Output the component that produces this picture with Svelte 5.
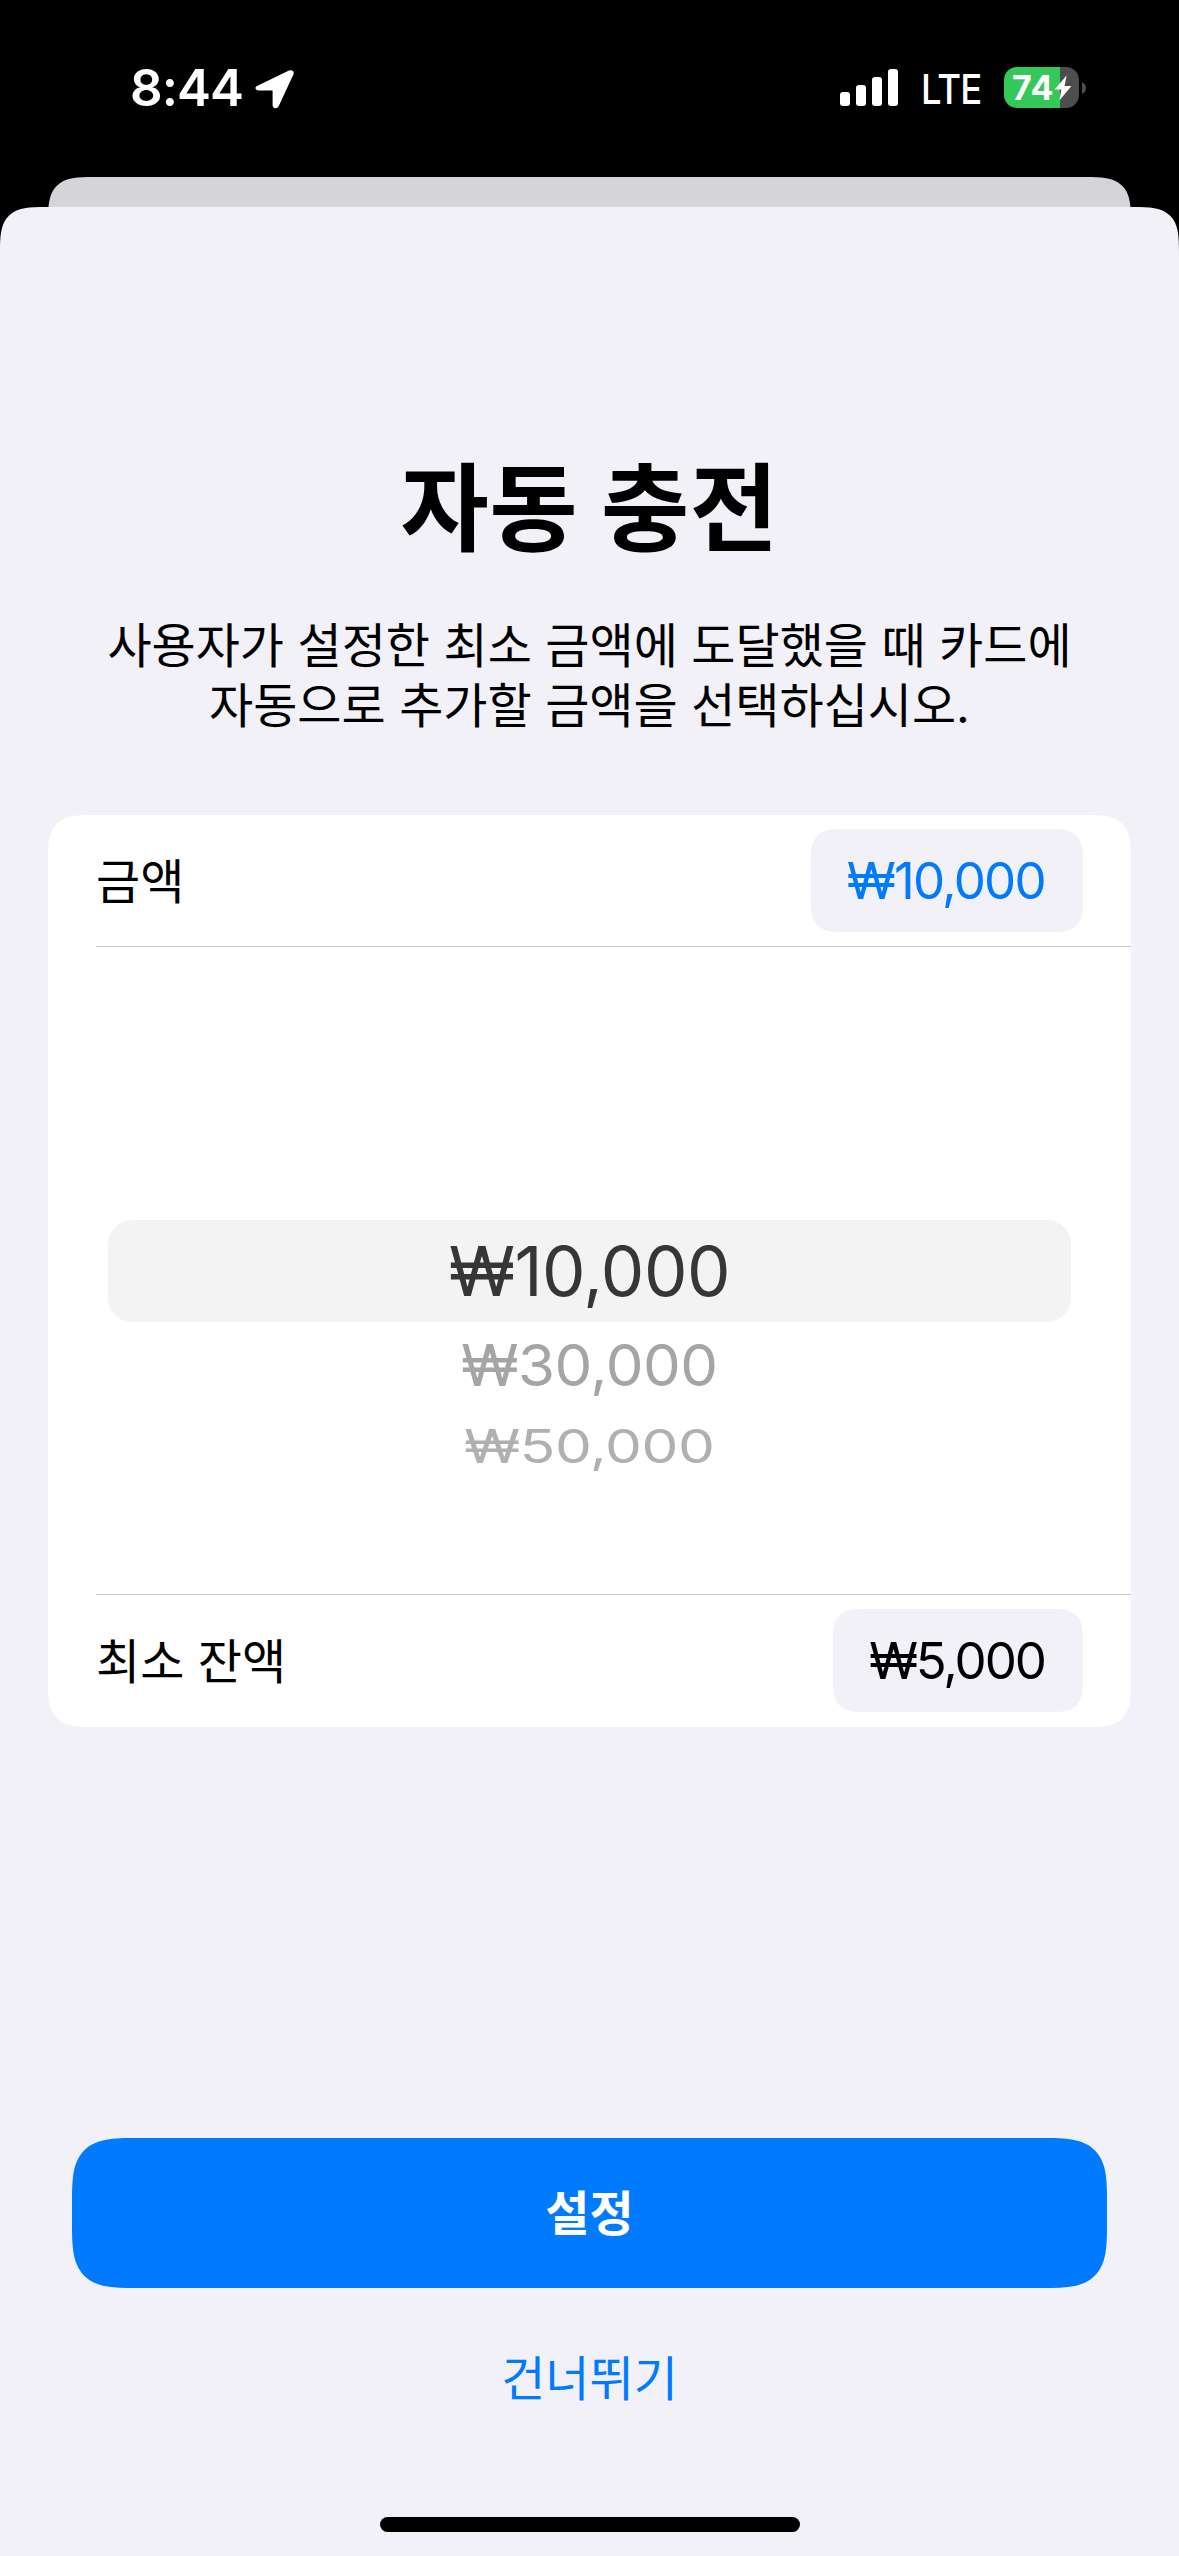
<script>
  const bars = [14, 21, 29, 37];
  const options = [
    { text: '₩10,000', kind: 'selected' },
    { text: '₩30,000', kind: 'second' },
    { text: '₩50,000', kind: 'third' },
  ];
</script>

<div class="screen">
  <header class="status">
    <div class="clock">
      <span class="time">8:44</span>
      <svg class="arrow" width="40" height="40" viewBox="0 0 40 40"><path d="M3 16.5 L34 1.6 Q39.5 -0.2 38.6 5 L23.8 37 Q21.8 40.5 18.8 38.8 Q17.6 37.8 17.6 36 V21.6 H4 Q0.6 21.4 0.4 18.8 Q0.6 17.4 3 16.5Z" fill="#fff" /></svg>
    </div>
    <div class="indicators">
      <div class="signal">
        {#each bars as h}<i style="height:{h}px"></i>{/each}
      </div>
      <span class="lte">LTE</span>
      <div class="battery">
        <div class="cell">
          <span class="pct">74</span>
          <svg width="18" height="26" viewBox="0 0 18 26"><path d="M12.6 0.6 L0.6 14.6 H7.4 L5.4 25.4 L17.4 10.9 H10.6Z" fill="#fff" /></svg>
        </div>
        <svg width="4" height="12" viewBox="0 0 4 12"><path d="M0 0 Q4 2 4 6 Q4 10 0 12Z" fill="#4d4d4f" /></svg>
      </div>
    </div>
  </header>
  <div class="behind"></div>
  <main class="sheet">
    <h1>자동 충전</h1>
    <p class="desc">사용자가 설정한 최소 금액에 도달했을 때 카드에<br />자동으로 추가할 금액을 선택하십시오.</p>
    <section class="card">
      <div class="row">
        <span class="label">금액</span>
        <button class="pill active">₩10,000</button>
      </div>
      <div class="picker">
        {#each options as o}
          <div class="option {o.kind}">{o.text}</div>
        {/each}
      </div>
      <div class="row last">
        <span class="label">최소 잔액</span>
        <button class="pill small">₩5,000</button>
      </div>
    </section>
    <footer>
      <button class="primary">설정</button>
      <button class="skip">건너뛰기</button>
      <div class="home"></div>
    </footer>
  </main>
</div>

<style>
  :global(body) { background: #000; }
  * { box-sizing: border-box; }
  .screen {
    width: 1179px;
    height: 2556px;
    display: flex;
    flex-direction: column;
    background: #000;
    overflow: hidden;
    font-family: Inter, 'Noto Sans CJK KR', sans-serif;
    color: #000;
    white-space: nowrap;
  }
  button { border: 0; padding: 0; margin: 0; font: inherit; color: inherit; background: none; }
  .status {
    height: 177px;
    flex: none;
    display: flex;
    justify-content: space-between;
    align-items: flex-start;
    padding: 67px 93px 0 130px;
    color: #fff;
  }
  .clock { display: flex; gap: 13px; }
  .time { font-size: 51px; font-weight: 600; line-height: 42px; width: 112px; letter-spacing: -1px; }
  .arrow { margin-top: 2px; }
  .indicators { display: flex; align-items: flex-start; }
  .signal { display: flex; align-items: flex-end; gap: 6px; height: 39px; }
  .signal i { width: 10px; border-radius: 3px; background: #fff; }
  .lte {
    font-size: 41px;
    font-weight: 500;
    line-height: 44px;
    margin-left: 23px;
    width: 83px;
    letter-spacing: -1px;
    transform: scaleX(0.89);
    transform-origin: 0 50%;
  }
  .battery { display: flex; align-items: center; gap: 3px; height: 41px; }
  .cell {
    width: 75px;
    height: 41px;
    border-radius: 13px;
    background: linear-gradient(90deg, #34c759 56px, #4d4d4f 56px);
    display: flex;
    align-items: center;
    padding-left: 8px;
  }
  .pct { font-size: 34px; font-weight: 700; line-height: 41px; width: 42px; letter-spacing: 0.8px; }
  .behind {
    height: 60px;
    flex: none;
    margin: 0 48px -30px;
    background: #d5d4d9;
    border-radius: 46px 46px 0 0;
    corner-shape: superellipse(1.7);
  }
  .sheet {
    flex: 1;
    display: flex;
    flex-direction: column;
    background: #f2f1f7;
    border-radius: 46px 46px 0 0;
    corner-shape: superellipse(1.7);
  }
  h1 {
    margin: 241px 0 0;
    font-size: 96px;
    line-height: 120px;
    font-weight: 700;
    text-align: center;
    letter-spacing: 0.4px;
  }
  .desc { margin: 48px 0 0; font-size: 48px; line-height: 60px; text-align: center; }
  .card {
    margin: 79px 48px 0;
    height: 912px;
    flex: none;
    background: #fff;
    border-radius: 46px;
    corner-shape: superellipse(1.7);
    display: flex;
    flex-direction: column;
  }
  .row {
    height: 132px;
    margin-left: 48px;
    padding-right: 48px;
    display: flex;
    align-items: center;
    justify-content: space-between;
    border-bottom: 1px solid #c6c6c8;
    flex: none;
  }
  .row.last { height: 133px; border-bottom: 0; border-top: 1px solid #c6c6c8; padding-bottom: 1px; }
  .label { font-size: 48px; padding-bottom: 5px; }
  .pill {
    width: 272px;
    height: 103px;
    padding-right: 2px;
    border-radius: 30px;
    corner-shape: superellipse(1.5);
    background: #f2f1f7;
    font-size: 51px;
    letter-spacing: -1.75px;
  }
  .pill.small { width: 250px; letter-spacing: -2.1px; }
  .active { color: #007aff; }
  .picker { flex: 1; padding: 273px 60px 0; text-align: center; font-size: 69px; letter-spacing: -0.5px; }
  .option { height: 102px; line-height: 102px; }
  .selected { background: #f3f3f4; color: #363636; border-radius: 24px; }
  /* Options below the selection are foreshortened like faces of a wheel. */
  .second { height: 86px; line-height: 86px; color: #a5a5a5; transform: scale(0.868, 0.843); }
  .third { height: 76px; line-height: 76px; color: #b0b0b0; transform: scale(0.849, 0.67); }
  footer { margin-top: auto; display: flex; flex-direction: column; align-items: center; }
  .primary {
    width: 1035px;
    height: 150px;
    padding-bottom: 6px;
    border-radius: 64px;
    corner-shape: superellipse(1.7);
    background: #007aff;
    color: #fff;
    font-size: 48px;
    font-weight: 600;
  }
  .skip { margin-top: 45px; height: 90px; padding-bottom: 6px; color: #007aff; font-size: 48px; }
  .home { margin: 94px 0 24px; width: 420px; height: 15px; border-radius: 8px; background: #000; }
</style>
